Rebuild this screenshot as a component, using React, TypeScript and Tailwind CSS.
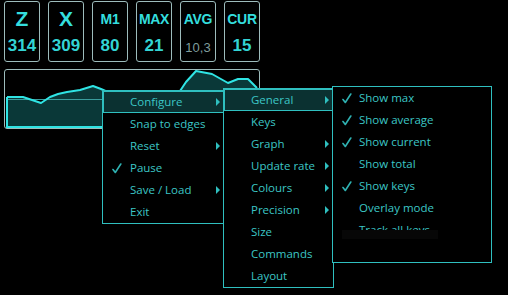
import React from "react";

type Item = { label: string; checked?: boolean; arrow?: boolean; active?: boolean };

const keys = [
  { top: "Z", bottom: "314", big: true },
  { top: "X", bottom: "309", big: true },
  { top: "M1", bottom: "80" },
  { top: "MAX", bottom: "21" },
  { top: "AVG", bottom: "10,3", dim: true },
  { top: "CUR", bottom: "15" },
];

function Check() {
  return (
    <svg width="10" height="11" viewBox="0 0 10 11" className="shrink-0">
      <path d="M1 6.5 L3.3 9.5 L8.8 1" fill="none" stroke="#2fb2b2" strokeWidth="1.6" strokeLinecap="round" strokeLinejoin="round" />
    </svg>
  );
}

function Arrow() {
  return (
    <svg width="4" height="8" viewBox="0 0 4 8" className="shrink-0">
      <path d="M0 0 L4 4 L0 8 Z" fill="#2fbfbf" />
    </svg>
  );
}

function MenuRow({ item, checkW }: { item: Item; checkW: number }) {
  return (
    <div
      className={`flex h-[22px] items-center pr-[3px] ${
        item.active ? "border border-[#2fbfbf] bg-[#0b3131]" : "border border-transparent"
      }`}
    >
      <div className="flex shrink-0 justify-center" style={{ width: checkW }}>
        {item.checked && <Check />}
      </div>
      <span className="flex-1 whitespace-nowrap text-[#3cc6c6]">{item.label}</span>
      {item.arrow && <Arrow />}
    </div>
  );
}

function Menu({ items, checkW, className }: { items: Item[]; checkW: number; className: string }) {
  return (
    <div className={`absolute flex flex-col border border-[#2fbfbf] bg-black ${className}`}>
      {items.map((it) => (
        <MenuRow key={it.label} item={it} checkW={checkW} />
      ))}
    </div>
  );
}

export default function App() {
  const line = "2,27 18,27 36,33 45,27 53,24 62,22 75,20 88,16 96,19 105,23 175,21 181,12 191,1 207,4 223,13 233,9 243,9 252,18";

  return (
    <div className="relative h-[295px] w-[508px] overflow-hidden bg-black font-['Open_Sans',sans-serif] text-[11.5px]">
      <div className="flex flex-col pl-[4px] pt-[1px]">
        {/* key counters */}
        <div className="flex gap-[8px]">
          {keys.map((k) => (
            <div
              key={k.top}
              className="flex h-[61px] w-[36px] flex-col items-center rounded-[3px] border border-[#9dbcbc] font-['Liberation_Sans',Arial,sans-serif]"
            >
              <div className="flex h-[34px] items-center">
                <span
                  className={`font-bold text-[#34dede] ${k.big ? "text-[21px]" : "text-[14px] tracking-[-0.3px]"}`}
                >
                  {k.top}
                </span>
              </div>
              <span
                className={
                  k.dim
                    ? "mt-[2px] text-[13px] text-[#7f9c9c]"
                    : "text-[17px] font-bold leading-[20px] text-[#33d4d4]"
                }
              >
                {k.bottom}
              </span>
            </div>
          ))}
        </div>

        {/* graph */}
        <div className="relative mt-[7px] h-[60px] w-[256px] rounded-[3px] border border-[#9dbcbc]">
          <svg width="254" height="58" viewBox="0 0 254 58" className="absolute left-0 top-0">
            <polygon points={`${line} 252,57 2,57`} fill="#0a3838" />
            <line x1="2" y1="29.5" x2="252" y2="29.5" stroke="#3a9c9c" strokeWidth="1" />
            <polyline points={line} fill="none" stroke="#2fe4e4" strokeWidth="2" strokeLinejoin="round" />
            <polyline points="2,27 2,57 252,57" fill="none" stroke="#2fe4e4" strokeWidth="2" />
          </svg>
        </div>
      </div>

      {/* context menus */}
      <Menu
        className="left-[102px] top-[90px] w-[123px]"
        checkW={26}
        items={[
          { label: "Configure", arrow: true, active: true },
          { label: "Snap to edges" },
          { label: "Reset", arrow: true },
          { label: "Pause", checked: true },
          { label: "Save / Load", arrow: true },
          { label: "Exit" },
        ]}
      />
      <Menu
        className="left-[223px] top-[88px] w-[111px]"
        checkW={26}
        items={[
          { label: "General", arrow: true, active: true },
          { label: "Keys" },
          { label: "Graph", arrow: true },
          { label: "Update rate", arrow: true },
          { label: "Colours", arrow: true },
          { label: "Precision", arrow: true },
          { label: "Size" },
          { label: "Commands" },
          { label: "Layout" },
        ]}
      />
      <div className="absolute left-[332px] top-[86px] flex h-[177px] w-[160px] flex-col border border-[#2fbfbf] bg-black">
        <div className="h-[143px] overflow-hidden">
          {[
            { label: "Show max", checked: true },
            { label: "Show average", checked: true },
            { label: "Show current", checked: true },
            { label: "Show total" },
            { label: "Show keys", checked: true },
            { label: "Overlay mode" },
            { label: "Track all keys" },
          ].map((it) => (
            <MenuRow key={it.label} item={it} checkW={25} />
          ))}
        </div>
        <div className="ml-[9px] h-[9px] w-[96px] bg-[#070707]" />
      </div>
    </div>
  );
}
